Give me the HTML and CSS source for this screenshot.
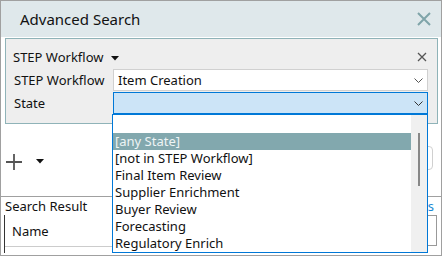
FILE: index.html
```html
<!DOCTYPE html>
<html lang="en">
<head>
  <meta charset="UTF-8" />
  <title>Advanced Search</title>
  <link rel="stylesheet" href="styles.css">
</head>
<body>
  <div class="window">
    <header class="titlebar">
      <h1>Advanced Search</h1>
      <svg class="close-big" width="14" height="14" viewBox="0 0 14 14"><path d="M1 1L13 13M13 1L1 13" stroke="#7fa4a9" stroke-width="2"/></svg>
    </header>

    <section class="criteria">
      <div class="criteria-head">
        <span class="criteria-title">STEP Workflow <svg width="8" height="5" viewBox="0 0 8 5"><path d="M0 0H8L4 4.5Z" fill="#111"/></svg></span>
        <svg class="close-small" width="10" height="10" viewBox="0 0 10 10"><path d="M1 1L9 9M9 1L1 9" stroke="#555" stroke-width="1.3"/></svg>
      </div>
      <div class="field">
        <label>STEP Workflow</label>
        <div class="select">
          <span>Item Creation</span>
          <svg width="9" height="5" viewBox="0 0 9 5"><path d="M0.5 0.5L4.5 4.5L8.5 0.5" stroke="#555" fill="none"/></svg>
        </div>
      </div>
      <div class="field">
        <label>State</label>
        <div class="select open">
          <span></span>
          <svg width="9" height="5" viewBox="0 0 9 5"><path d="M0.5 0.5L4.5 4.5L8.5 0.5" stroke="#333" fill="none"/></svg>
        </div>
      </div>

      <div class="dropdown">
        <ul class="options">
          <li class="blank"></li>
          <li class="active">[any State]</li>
          <li>[not in STEP Workflow]</li>
          <li>Final Item Review</li>
          <li>Supplier Enrichment</li>
          <li>Buyer Review</li>
          <li>Forecasting</li>
          <li>Regulatory Enrich</li>
        </ul>
        <div class="scrollbar"><div class="thumb"></div></div>
      </div>
    </section>

    <div class="toolbar">
      <div class="add">
        <svg width="18" height="18" viewBox="0 0 18 18"><path d="M9 1V17M1 9H17" stroke="#555" stroke-width="1.8"/></svg>
        <svg width="8" height="5" viewBox="0 0 8 5"><path d="M0 0H8L4 4.5Z" fill="#111"/></svg>
      </div>
      <div class="search-box"></div>
    </div>

    <div class="result-head">
      <span>Search Result</span>
      <a href="#">Details</a>
    </div>

    <div class="table">
      <div class="th">Name</div>
      <div class="th-side"></div>
    </div>
  </div>
</body>
</html>
```

FILE: styles.css
```css
body {
  margin: 0;
  font-family: 'Noto Sans', sans-serif;
  font-size: 13px;
  color: #111;
  background: #fff;
}
.window {
  position: relative;
  width: 440px;
  height: 254px;
  border: 1px solid #a0a0a0;
  background: #fff;
  overflow: hidden;
}
.titlebar {
  height: 36px;
  background: #dfe8eb;
  display: flex;
  align-items: center;
  justify-content: space-between;
  padding: 0 10px 0 19px;
}
.titlebar h1 {
  margin: 0;
  font-size: 15px;
  font-weight: normal;
  color: #111;
}
.criteria {
  position: relative;
  margin: 1px 3px 0 4px;
  border: 1px solid #8fb3b8;
  background: #eee;
  padding: 7px 9px 8px 7px;
}
.criteria-head {
  height: 22px;
  display: flex;
  align-items: center;
  justify-content: space-between;
  margin-bottom: 1px;
}
.criteria-title svg {
  margin-left: 4px;
  vertical-align: middle;
}
.close-small {
  margin-right: 1px;
}
.field {
  display: flex;
  align-items: center;
  margin-bottom: 1px;
}
.field label {
  width: 99px;
  padding-left: 1px;
}
.select {
  flex: 1;
  height: 20px;
  border: 1px solid #d0d0d0;
  background: #fff;
  display: flex;
  align-items: center;
  justify-content: space-between;
  padding: 0 4px 0 4px;
}
.select.open {
  background: #cce4f7;
  border-color: #0078d7;
}
.dropdown {
  position: absolute;
  left: 106px;
  top: 75px;
  width: 314px;
  height: 137px;
  border: 1px solid #0078d7;
  background: #fff;
  display: flex;
  z-index: 2;
}
.options {
  list-style: none;
  margin: 0;
  padding: 0;
  flex: 1;
}
.options li {
  height: 17px;
  line-height: 17px;
  padding-left: 2px;
  white-space: nowrap;
  overflow: hidden;
}
.options li.blank {
  height: 18px;
}
.options li.active {
  background: #82a8ae;
  color: #eef4f5;
}
.scrollbar {
  width: 16px;
  background: #f0f0f0;
}
.thumb {
  margin: 18px 0 0 7px;
  width: 2px;
  height: 53px;
  background: #888;
}
.toolbar {
  height: 73px;
  display: flex;
  align-items: center;
  justify-content: space-between;
  border-bottom: 1px solid #a0a0a0;
  padding: 3px 8px 0 4px;
  box-sizing: border-box;
}
.add {
  display: flex;
  align-items: center;
  gap: 13px;
}
.search-box {
  width: 130px;
  height: 22px;
  border: 1px solid #d0d0d0;
  border-radius: 4px;
  margin-bottom: 8px;
}
.result-head {
  height: 18px;
  display: flex;
  align-items: center;
  justify-content: space-between;
  padding: 0 7px 0 4px;
}
.result-head a {
  color: #1a8ad4;
  text-decoration: none;
}
.table {
  margin: 0 4px 0 3px;
  height: 38px;
  border-left: 1px solid #333;
  display: flex;
}
.th {
  flex: 1;
  height: 31px;
  line-height: 32px;
  padding-left: 7px;
  border-bottom: 1px solid #ccc;
}
.th-side {
  width: 9px;
  height: 29px;
  border: 1px solid #999;
}
```
